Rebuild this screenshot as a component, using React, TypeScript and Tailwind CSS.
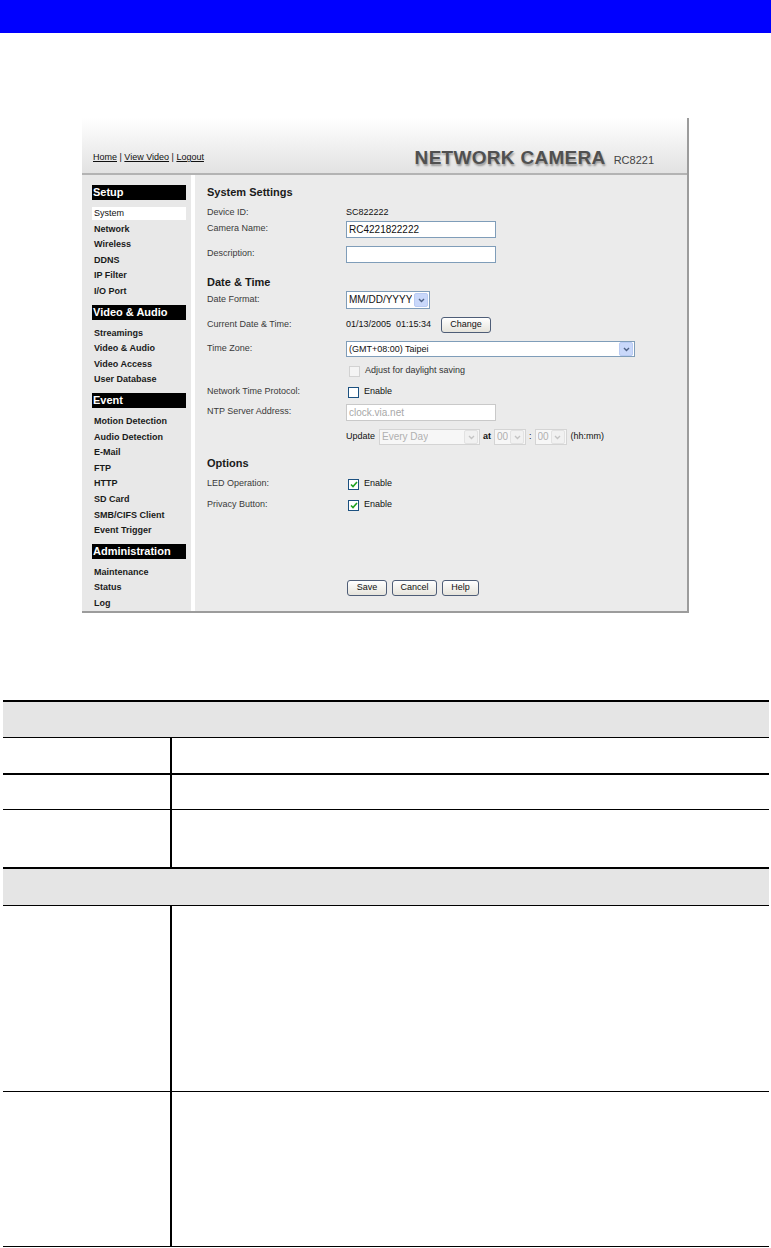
import React from 'react';

const sans = "font-['Liberation_Sans',Arial,sans-serif]";

const menu = [
  { title: 'Setup', items: ['System', 'Network', 'Wireless', 'DDNS', 'IP Filter', 'I/O Port'] },
  { title: 'Video & Audio', items: ['Streamings', 'Video & Audio', 'Video Access', 'User Database'] },
  {
    title: 'Event',
    items: ['Motion Detection', 'Audio Detection', 'E-Mail', 'FTP', 'HTTP', 'SD Card', 'SMB/CIFS Client', 'Event Trigger'],
  },
  { title: 'Administration', items: ['Maintenance', 'Status', 'Log'] },
];

function Arrow({ disabled }: { disabled?: boolean }) {
  return (
    <span
      className={
        'flex h-[14px] w-[14px] shrink-0 items-center justify-center rounded-[2px] border ' +
        (disabled ? 'border-[#e2e2e2] bg-[#f1f1f1]' : 'border-[#b9cbf3] bg-[#c9d8fa]')
      }
    >
      <svg width="7" height="5" viewBox="0 0 7 5">
        <path d="M1 1 L3.5 3.5 L6 1" fill="none" stroke={disabled ? '#c4c4c4' : '#4d6185'} strokeWidth="1.4" />
      </svg>
    </span>
  );
}

function Select({ value, w, h = 16, size = 9, disabled }: { value: string; w: number; h?: number; size?: number; disabled?: boolean }) {
  return (
    <div
      className={
        'flex items-center justify-between border pl-[2px] pr-[1px] ' +
        (disabled ? 'border-[#d4d4d4] bg-[#f7f7f7] text-[#b0b0b0]' : 'border-[#7f9db9] bg-white text-[#111]')
      }
      style={{ width: w, height: h, fontSize: size }}
    >
      <span className="truncate leading-none">{value}</span>
      <Arrow disabled={disabled} />
    </div>
  );
}

function Check({ checked, disabled }: { checked?: boolean; disabled?: boolean }) {
  return (
    <span
      className={
        'flex h-[11px] w-[11px] shrink-0 items-center justify-center border ' +
        (disabled ? 'border-[#d2d2d2] bg-[#f4f4f4]' : 'border-[#1c5180] bg-white')
      }
    >
      {checked && (
        <svg width="8" height="7" viewBox="0 0 8 7">
          <path d="M1 3.5 L3 5.5 L7 1" fill="none" stroke="#21a121" strokeWidth="1.6" />
        </svg>
      )}
    </span>
  );
}

function Btn({ label, w }: { label: string; w: number }) {
  return (
    <span
      className="flex h-[16px] items-center justify-center rounded-[3px] border border-[#4e5d77] bg-gradient-to-b from-white to-[#e6e4dc] text-[9px] text-[#111]"
      style={{ width: w }}
    >
      {label}
    </span>
  );
}

function Row({ label, mt, children }: { label?: string; mt: number; children?: React.ReactNode }) {
  return (
    <div className="flex h-[16px] items-center" style={{ marginTop: mt }}>
      <span className="w-[139px] shrink-0 text-[9px] text-[#3a3a3a]">{label}</span>
      <div className="flex items-center">{children}</div>
    </div>
  );
}

function Heading({ text, mt }: { text: string; mt: number }) {
  return (
    <div className="flex h-[16px] items-center text-[11px] font-bold text-[#1a1a1a]" style={{ marginTop: mt }}>
      {text}
    </div>
  );
}

export default function App() {
  return (
    <div className={`${sans} h-[1248px] w-[771px] overflow-hidden bg-white`}>
      <div className="h-[33px] bg-[#0000ff]" />

      <div className="ml-[82px] mt-[85px] w-[607px] border-r-2 border-[#9c9c9c]">
        <div className="h-[57px] border-b-2 border-[#b3b3b3] bg-gradient-to-b from-white to-[#e2e2e2] pt-[31px]">
          <div className="flex h-[18px] items-center justify-between pl-[11px] pr-[33px]">
            <div className="text-[9px] text-[#111]">
              <span className="underline">Home</span> | <span className="underline">View Video</span> |{' '}
              <span className="underline">Logout</span>
            </div>
            <div className="flex items-baseline gap-[8px]">
              <span className="text-[19px] font-bold tracking-[0.3px] text-[#505050] [text-shadow:1px_2px_2px_rgba(0,0,0,0.35)]">
                NETWORK CAMERA
              </span>
              <span className="text-[11px] text-[#444]">RC8221</span>
            </div>
          </div>
        </div>

        <div className="flex h-[438px] border-b-2 border-[#9c9c9c]">
          <div className="w-[109px] shrink-0 bg-[#e8e8e8] pl-[10px] pr-[5px] pt-[10px]">
            {menu.map((g, gi) => (
              <div key={g.title} className={gi ? 'mt-[5px]' : ''}>
                <div className="flex h-[15px] items-center bg-black pl-[1px] text-[11px] font-bold text-white">{g.title}</div>
                <div className="mt-[6px]">
                  {g.items.map((it) => (
                    <div key={it} className="flex h-[15.6px] items-center">
                      <span
                        className={
                          'flex h-[13px] w-full items-center pl-[2px] text-[9px] ' +
                          (it === 'System' && g.title === 'Setup' ? 'bg-white font-normal text-[#111]' : 'font-bold text-[#1a1a1a]')
                        }
                      >
                        {it}
                      </span>
                    </div>
                  ))}
                </div>
              </div>
            ))}
          </div>
          <div className="w-[4px] shrink-0 bg-white" />
          <div className="flex-1 bg-[#ebebeb] pl-[12px] pt-[9px]">
            <Heading text="System Settings" mt={0} />
            <Row label="Device ID:" mt={5}>
              <span className="text-[9px] text-[#111]">SC822222</span>
            </Row>
            <Row label="Camera Name:" mt={0}>
              <span className="flex h-[17px] w-[150px] items-center border border-[#7f9db9] bg-white pl-[2px] text-[10px] text-[#111]">
                RC4221822222
              </span>
            </Row>
            <Row label="Description:" mt={9}>
              <span className="h-[17px] w-[150px] border border-[#7f9db9] bg-white" />
            </Row>
            <Heading text="Date & Time" mt={12} />
            <Row label="Date Format:" mt={2}>
              <Select value="MM/DD/YYYY" w={84} h={18} size={10} />
            </Row>
            <Row label="Current Date & Time:" mt={9}>
              <span className="text-[9px] text-[#111]">01/13/2005&nbsp;&nbsp;01:15:34</span>
              <span className="ml-[10px]">
                <Btn label="Change" w={50} />
              </span>
            </Row>
            <Row label="Time Zone:" mt={8}>
              <Select value="(GMT+08:00) Taipei" w={289} />
            </Row>
            <Row mt={6}>
              <span className="ml-[3px]">
                <Check disabled />
              </span>
              <span className="ml-[5px] text-[9px] text-[#333]">Adjust for daylight saving</span>
            </Row>
            <Row label="Network Time Protocol:" mt={5}>
              <span className="ml-[2px]">
                <Check />
              </span>
              <span className="ml-[5px] text-[9px] text-[#111]">Enable</span>
            </Row>
            <Row label="NTP Server Address:" mt={4}>
              <span className="flex h-[17px] w-[150px] items-center border border-[#c9c9c9] bg-white pl-[2px] text-[10px] text-[#a8a8a8]">
                clock.via.net
              </span>
            </Row>
            <Row mt={9}>
              <span className="text-[9px] text-[#111]">Update</span>
              <span className="ml-[4px]">
                <Select value="Every Day" w={101} disabled size={10} />
              </span>
              <span className="ml-[3px] text-[9px] font-bold text-[#111]">at</span>
              <span className="ml-[3px]">
                <Select value="00" w={32} disabled size={10} />
              </span>
              <span className="mx-[3px] text-[9px] text-[#111]">:</span>
              <Select value="00" w={32} disabled size={10} />
              <span className="ml-[4px] text-[9px] text-[#111]">(hh:mm)</span>
            </Row>
            <Heading text="Options" mt={10} />
            <Row label="LED Operation:" mt={5}>
              <span className="ml-[2px]">
                <Check checked />
              </span>
              <span className="ml-[5px] text-[9px] text-[#111]">Enable</span>
            </Row>
            <Row label="Privacy Button:" mt={5}>
              <span className="ml-[2px]">
                <Check checked />
              </span>
              <span className="ml-[5px] text-[9px] text-[#111]">Enable</span>
            </Row>
            <Row mt={67}>
              <span className="ml-[1px] flex gap-[5px]">
                <Btn label="Save" w={40} />
                <Btn label="Cancel" w={45} />
                <Btn label="Help" w={37} />
              </span>
            </Row>
          </div>
        </div>
      </div>

      <div className="ml-[3px] mt-[87px] w-[766px]">
        <div className="h-[38px] border-t-2 border-b border-black bg-[#e5e5e5]" />
        <div className="flex h-[37px] border-b-2 border-black">
          <div className="w-[169px] border-r-2 border-black" />
          <div className="flex-1" />
        </div>
        <div className="flex h-[35px] border-b border-black">
          <div className="w-[169px] border-r-2 border-black" />
          <div className="flex-1" />
        </div>
        <div className="flex h-[59px] border-b-2 border-black">
          <div className="w-[169px] border-r-2 border-black" />
          <div className="flex-1" />
        </div>
        <div className="h-[37px] border-b border-black bg-[#e5e5e5]" />
        <div className="flex h-[186px] border-b border-black">
          <div className="w-[169px] border-r-2 border-black" />
          <div className="flex-1" />
        </div>
        <div className="flex h-[155px] border-b border-black">
          <div className="w-[169px] border-r-2 border-black" />
          <div className="flex-1" />
        </div>
      </div>
    </div>
  );
}
